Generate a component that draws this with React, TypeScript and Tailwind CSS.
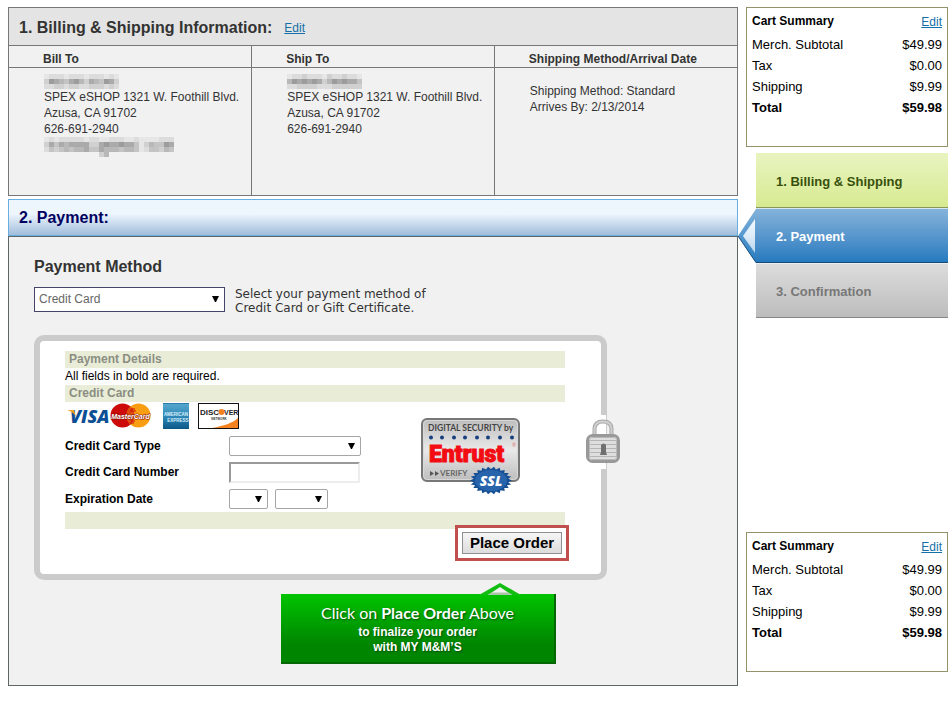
import type { ReactNode } from 'react'

const cartLines = [
    { label: 'Merch. Subtotal', value: '$49.99' },
    { label: 'Tax', value: '$0.00' },
    { label: 'Shipping', value: '$9.99' },
]

const hiddenBillName = ['122212221222121', '376546753654763', '223323322333232']
const hiddenShipName = ['122322213223221', '576767635767664', '223333222333333']
const hiddenEmail = ['12122222122112221121111222', '36465666633676676641354476', '24345455644655545541244354', '00000000000350000000000000']

const shades = ['none', '#e6e6e6', '#dcdcdc', '#d0d0d0', '#c4c4c4', '#b8b8b8', '#aaaaaa', '#9c9c9c']

function Mosaic({ rows, label }: { rows: string[]; label: string }) {
    return (
        <svg role="img" aria-label={label} width={rows[0].length * 5} height={rows.length * 5} shapeRendering="crispEdges" className="block">
            {rows.map((row, y) =>
                row.split('').map((shade, x) => (
                    <rect key={`${x}-${y}`} x={x * 5} y={y * 5} width="5" height="5" fill={shades[Number(shade)]} />
                ))
            )}
        </svg>
    )
}

function Select({ label, id, className, children }: { label?: string; id: string; className: string; children?: ReactNode }) {
    return (
        <div className="relative">
            <select id={id} aria-label={label} className={`block appearance-none bg-white ${className}`}>
                {children ?? <option></option>}
            </select>
            <svg width="7" height="6" className="pointer-events-none absolute top-1/2 right-1.5 -mt-[3px]">
                <path d="M0 0H7L4 6H3Z" fill="#000" />
            </svg>
        </div>
    )
}

function CartSummary() {
    return (
        <section className="h-[140px] border border-[#94926a] bg-white px-[5px] pt-1 text-black">
            <div className="flex items-start justify-between">
                <h2 className="text-[12px] leading-[18px] font-bold">Cart Summary</h2>
                <a href="#cart" className="text-[12px] leading-5 text-[#1470a8] underline">Edit</a>
            </div>
            <table className="mt-0.5 w-full text-[13px] leading-[21px]">
                <tbody>
                    {cartLines.map((line) => (
                        <tr key={line.label}>
                            <td>{line.label}</td>
                            <td className="text-right">{line.value}</td>
                        </tr>
                    ))}
                    <tr className="font-bold">
                        <td>Total</td>
                        <td className="text-right">$59.98</td>
                    </tr>
                </tbody>
            </table>
        </section>
    )
}

function Steps() {
    return (
        <ol className="mt-1.5 ml-2.5 text-[13px] font-bold">
            <li className="flex h-[55px] items-center border-b border-[#8a9659] bg-linear-to-b from-[#e8f4c0] to-[#d7ea90] pt-[3px] pl-5 text-[#38500c]">
                1. Billing &amp; Shipping
            </li>
            <li className="relative flex h-[55px] items-center border-t border-b border-t-[#d9e6f0] border-b-[#174a78] bg-linear-to-b from-[#84b3da] to-[#247abf] pt-[3px] pl-5 text-white">
                <svg width="18" height="55" viewBox="0 0 18 55" className="absolute -top-px -left-[18px]">
                    <defs>
                        <linearGradient id="arrow" x1="0" y1="0" x2="0" y2="1">
                            <stop offset="0" stopColor="#84b3da" />
                            <stop offset="1" stopColor="#247abf" />
                        </linearGradient>
                        <linearGradient id="arrowInner" x1="0" y1="0" x2="0" y2="1">
                            <stop offset="0" stopColor="#f4faff" />
                            <stop offset="0.5" stopColor="#dcebf7" />
                            <stop offset="1" stopColor="#b5d4ed" />
                        </linearGradient>
                    </defs>
                    <path d="M18 1V55L0 28Z" fill="url(#arrow)" />
                    <path d="M0 28L18 54.5" stroke="#1d5283" fill="none" />
                    <path d="M17 11V45L5 28Z" fill="url(#arrowInner)" />
                </svg>
                2. Payment
            </li>
            <li className="flex h-[55px] items-center border-t border-b border-t-[#eeeeee] border-b-[#858585] bg-linear-to-b from-[#dcdcdc] to-[#bdbdbd] pt-[3px] pl-5 text-[#777]">
                3. Confirmation
            </li>
        </ol>
    )
}

function CardLogos() {
    return (
        <svg role="img" aria-label="Visa, MasterCard, American Express, Discover" width="176" height="29" viewBox="0 0 176 29" className="block">
            <defs>
                <linearGradient id="amex" x1="0" y1="0" x2="0" y2="1">
                    <stop offset="0" stopColor="#58a8cf" />
                    <stop offset="0.55" stopColor="#2c86b5" />
                    <stop offset="1" stopColor="#0c5786" />
                </linearGradient>
            </defs>
            <text x="5" y="20" fontFamily="Open Sans" fontSize="18" fontWeight="800" fontStyle="italic" fill="#0d4f94">VISA</text>
            <path d="M2 7H9L11 14C9 10 6 8 2 7Z" fill="#f3a01d" />
            <circle cx="57.500" cy="12.500" r="12" fill="#cc0a0a" />
            <circle cx="73.500" cy="12.500" r="12" fill="#f99d12" />
            <path d="M65.500 3.500A12 12 0 0 1 65.500 21.500A12 12 0 0 1 65.500 3.500Z" fill="#dd4b0e" />
            <path d="M66 6H70M65 8H71M66 18H70M65 20H69" stroke="#cc0a0a" />
            <text x="65.500" y="16" textAnchor="middle" fontFamily="Liberation Sans" fontSize="7" fontWeight="700" fontStyle="italic" fill="#fff" stroke="#8c1408" strokeWidth="1" paintOrder="stroke">MasterCard</text>
            <rect x="98" y="0" width="26" height="26" fill="url(#amex)" />
            <path d="M98 .5H124" stroke="#2b7ca8" />
            <text x="111" y="13" textAnchor="middle" fontFamily="Liberation Sans" fontSize="4.500" fontWeight="700" fill="#d9effa">AMERICAN</text>
            <text x="113" y="19" textAnchor="middle" fontFamily="Liberation Sans" fontSize="4.500" fontWeight="700" fill="#d9effa">EXPRESS</text>
            <rect x="133.500" y="0.500" width="40" height="25" fill="#fff" stroke="#111" />
            <path d="M173 15V25H147C158 23 168 20 173 15Z" fill="#f58220" />
            <text x="135" y="12" fontFamily="Liberation Sans" fontSize="8" fontWeight="700" fill="#222">DISC</text>
            <circle cx="156.500" cy="9" r="3" fill="#f58220" />
            <text x="159" y="12" fontFamily="Liberation Sans" fontSize="7" fontWeight="700" fill="#222">VER</text>
            <text x="154" y="17" textAnchor="middle" fontFamily="Liberation Sans" fontSize="3" fontWeight="700" fill="#333">NETWORK</text>
        </svg>
    )
}

function EntrustSeal() {
    const teeth = Array.from({ length: 44 }, (_, i) => {
        const angle = (i * Math.PI) / 22
        const out = i % 2 === 0
        return `${70 + Math.cos(angle) * (out ? 21 : 17.5)},${62.5 + Math.sin(angle) * (out ? 14 : 11.5)}`
    }).join(' ')
    return (
        <svg role="img" aria-label="Digital security by Entrust" width="100" height="77" viewBox="0 0 100 77" className="block">
            <defs>
                <linearGradient id="seal" x1="0" y1="0" x2="0" y2="1">
                    <stop offset="0" stopColor="#bdbdbd" />
                    <stop offset="0.5" stopColor="#e9e9e9" />
                    <stop offset="1" stopColor="#bcbcbc" />
                </linearGradient>
            </defs>
            <rect x="1" y="1" width="97" height="62" rx="5" fill="url(#seal)" stroke="#777" strokeWidth="2" />
            <rect x="2.500" y="2.500" width="94" height="59" rx="4" fill="none" stroke="#d8d8d8" />
            <text x="7" y="13" fontFamily="Lato" fontSize="8.500" fontWeight="700" fill="#444">DIGITAL SECURITY by</text>
            {[10, 21, 33, 44, 56, 67, 79, 91].map((x) => (
                <circle key={x} cx={x} cy="19.500" r="2" fill="#173f7d" />
            ))}
            <text x="8" y="44" fontFamily="Roboto" fontSize="23" fontWeight="900" fill="#f30c12" stroke="#f30c12" strokeWidth="1">Entrust</text>
            <text x="91" y="29" fontFamily="Lato" fontSize="5" fill="#d77">®</text>
            <path d="M9 53L13 55.500L9 58ZM14 53L18 55.500L14 58Z" fill="#555" />
            <text x="19" y="58" fontFamily="Lato" fontSize="8" fontWeight="700" fill="#666">VERIFY</text>
            <polygon points={teeth} fill="#174f95" />
            <ellipse cx="70" cy="62.500" rx="16" ry="10.500" fill="#2864ab" />
            <text x="70" y="68" textAnchor="middle" fontFamily="Open Sans" fontSize="14" fontWeight="800" fontStyle="italic" fill="#fff">SSL</text>
        </svg>
    )
}

function Padlock() {
    return (
        <svg width="35" height="45" viewBox="0 0 35 45">
            <path d="M8.500 17V10Q8.500 2.500 17 2.500Q25.500 2.500 25.500 10V17" fill="none" stroke="#a7a7a7" strokeWidth="4" />
            <path d="M8.500 17V10Q8.500 2.500 17 2.500Q25.500 2.500 25.500 10V17" fill="none" stroke="#cfcfcf" strokeWidth="2" />
            <rect x="1.500" y="16.500" width="31" height="26" rx="5" fill="#e9e9e9" stroke="#999" strokeWidth="3" />
            <rect x="3.500" y="18.500" width="27" height="22" rx="2" fill="#dedede" stroke="#b9b9b9" />
            <path d="M4 21.500H30M4 25.500H30M4 29.500H30M4 33.500H30M4 37.500H30" stroke="#b5b5b5" />
            <path d="M15 26Q17.500 23 20 26V33L21 36H14L15 33Z" fill="#6f6f6f" />
        </svg>
    )
}

function PaymentDetails() {
    return (
        <form className="relative mt-[22px] max-w-[573px] rounded-[10px] border-[6px] border-[#cbcbcb] bg-white pt-2.5 pr-9 pb-[13px] pl-[25px] text-[12px] text-black">
            <h4 className="bg-[#e9edd8] pl-1 leading-[17px] font-bold text-[#8b8d82]">Payment Details</h4>
            <p className="leading-[17px]">All fields in bold are required.</p>
            <h4 className="bg-[#e9edd8] pl-1 leading-[17px] font-bold text-[#8b8d82]">Credit Card</h4>

            <div className="flex h-[110px] justify-between">
                <div>
                    <div className="pt-px">
                        <CardLogos />
                    </div>
                    <div className="mt-1 grid grid-cols-[164px_auto] items-center gap-y-1.5">
                        <label htmlFor="card-type" className="font-bold">Credit Card Type</label>
                        <Select id="card-type" className="h-5 w-[132px] rounded-xs border border-[#a6a6a6]" />
                        <label htmlFor="card-number" className="font-bold">Credit Card Number</label>
                        <input id="card-number" className="h-[21px] w-[131px] border-2 border-t-[#999] border-r-[#ededed] border-b-[#ededed] border-l-[#999] bg-white px-1" />
                        <span className="font-bold">Expiration Date</span>
                        <div className="flex gap-[7px]">
                            <Select id="exp-month" label="Expiration month" className="h-5 w-[39px] rounded-xs border border-[#a6a6a6]" />
                            <Select id="exp-year" label="Expiration year" className="h-5 w-[53px] rounded-xs border border-[#a6a6a6]" />
                        </div>
                    </div>
                </div>
                <div className="mt-4 mr-11">
                    <EntrustSeal />
                </div>
            </div>
            <div className="h-[17px] bg-[#e9edd8]" />

            <div className="relative -mt-1 -mr-1 flex justify-end">
                <div className="border-[3px] border-[#c0504d] bg-white p-1">
                    <button type="button" className="block h-[22px] w-[100px] border border-[#8f8f8f] bg-linear-to-b from-[#f6f6f6] to-[#dcdcdc] text-[15px] leading-5 font-bold whitespace-nowrap">
                        Place Order
                    </button>
                </div>
            </div>

            <div className="absolute top-[74px] -right-5 flex h-[54px] w-[35px] items-center bg-[linear-gradient(to_right,transparent_14px,white_14px,white_20px,transparent_20px)]">
                <Padlock />
            </div>
        </form>
    )
}

function OrderHint() {
    return (
        <div className="relative mt-[14px] ml-[247px] flex h-[70px] w-[275px] flex-col items-center border-r-2 border-b-2 border-[#056805] bg-linear-to-b from-[#00c400] to-[#008500] to-75% pt-[9px] text-white [text-shadow:1px_1px_2px_#004d00]">
            <svg width="42" height="13" viewBox="0 0 42 13" className="absolute -top-[11px] left-[198px]">
                <path d="M0 12L21 0L42 12Z" fill="#12be12" />
                <path d="M9 12L21 4L33 12Z" fill="#f2f2f2" />
                <path d="M9 12L13 9.500H29L33 12Z" fill="#a9c4a9" />
            </svg>
            <p className="font-[Lato,sans-serif] text-[16px] leading-5">
                Click on <b>Place Order</b> Above
            </p>
            <p className="mt-0.5 text-center text-[12px] leading-[15px] font-bold">
                to finalize your order
                <br />
                with MY M&amp;M’S
            </p>
        </div>
    )
}

export default function App() {
    return (
        <div className="flex min-h-screen items-start gap-2 bg-white pt-[7px] pl-2 font-['Liberation_Sans',Arial,sans-serif] text-[#333]">

            <main className="min-w-0 flex-1">

                <section className="border border-[#777] bg-[#f1f1f1]">
                    <div className="flex h-[37px] items-center gap-3 bg-[#e4e4e4] pt-0.5 pl-2.5">
                        <h2 className="text-[16px] font-bold">1. Billing &amp; Shipping Information:</h2>
                        <a href="#billing" className="text-[12px] text-[#1470a8] underline">Edit</a>
                    </div>
                    <table className="w-full table-fixed text-left text-[12px] leading-4">
                        <thead>
                            <tr className="h-[22px] border-y border-[#777]">
                                <th className="border-r border-[#777] pt-1 pl-[34px]">Bill To</th>
                                <th className="border-r border-[#777] pt-1 pl-[34px]">Ship To</th>
                                <th className="pt-1 pl-[34px]">Shipping Method/Arrival Date</th>
                            </tr>
                        </thead>
                        <tbody>
                            <tr className="h-[127px] align-top">
                                <td className="border-r border-[#777] pt-1.5 pl-[35px] whitespace-nowrap">
                                    <div className="h-[15px]"><Mosaic rows={hiddenBillName} label="Hidden name" /></div>
                                    <p>SPEX eSHOP 1321 W. Foothill Blvd.</p>
                                    <p>Azusa, CA 91702</p>
                                    <p>626-691-2940</p>
                                    <Mosaic rows={hiddenEmail} label="Hidden e-mail" />
                                </td>
                                <td className="border-r border-[#777] pt-1.5 pl-[35px] whitespace-nowrap">
                                    <div className="h-[15px]"><Mosaic rows={hiddenShipName} label="Hidden name" /></div>
                                    <p>SPEX eSHOP 1321 W. Foothill Blvd.</p>
                                    <p>Azusa, CA 91702</p>
                                    <p>626-691-2940</p>
                                </td>
                                <td className="pt-[15px] pl-[35px]">
                                    <p>Shipping Method: Standard</p>
                                    <p>Arrives By: 2/13/2014</p>
                                </td>
                            </tr>
                        </tbody>
                    </table>
                </section>

                <section className="mt-[3px]">
                    <h2 className="flex h-[37px] items-center border border-[#68aee0] bg-linear-to-b from-[#edf5fd] from-40% to-[#a1bddb] pt-0.5 pl-2.5 text-[16px] font-bold text-[#000060]">
                        2. Payment:
                    </h2>
                    <div className="border border-[#5f6666] bg-[#f1f1f1] px-[25px] pt-[19px] pb-[21px]">
                        <h3 className="text-[16px] leading-[22px] font-bold">Payment Method</h3>
                        <div className="mt-[9px] mb-[23px] flex h-[25px] items-start gap-2.5">
                            <Select id="payment-method" label="Payment Method" className="h-[25px] w-[191px] border border-[#45456a] pl-1 text-[12px] text-[#666]">
                                <option>Credit Card</option>
                            </Select>
                            <p className="font-['DejaVu_Sans',Verdana,sans-serif] text-[12px] leading-[14px]">
                                Select your payment method of
                                <br />
                                Credit Card or Gift Certificate.
                            </p>
                        </div>
                        <PaymentDetails />
                        <OrderHint />
                    </div>
                </section>

            </main>

            <aside className="w-[202px] shrink-0">
                <CartSummary />
                <Steps />
                <div className="mt-[214px]">
                    <CartSummary />
                </div>
            </aside>

        </div>
    )
}
